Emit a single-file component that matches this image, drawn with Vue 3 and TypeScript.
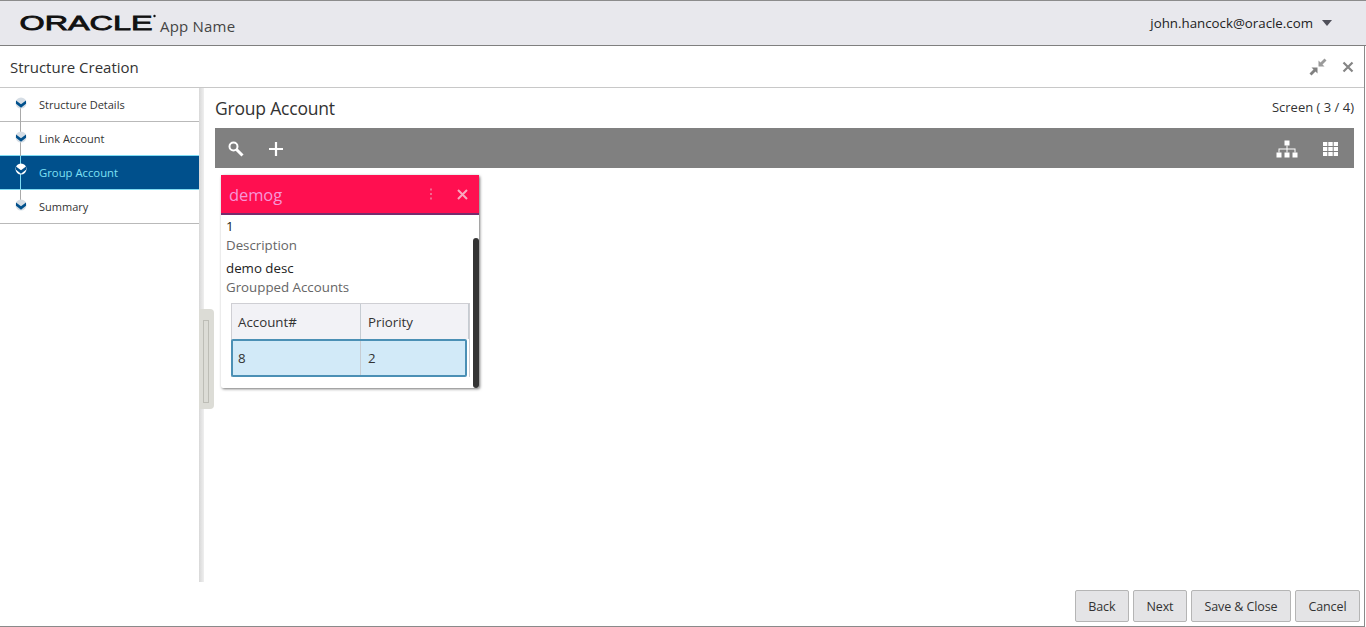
<script setup lang="ts">
interface Step { label: string; active?: boolean }
const steps: Step[] = [
  { label: 'Structure Details' },
  { label: 'Link Account' },
  { label: 'Group Account', active: true },
  { label: 'Summary' },
]
const buttons: string[] = ['Back', 'Next', 'Save & Close', 'Cancel']
</script>

<template>
  <div class="page">
    <header class="topbar">
      <div class="brand">
        <svg class="logo" width="138" height="24" viewBox="0 0 138 24">
          <text x="0.500" y="20" textLength="133" lengthAdjust="spacingAndGlyphs" class="logo-text">ORACLE</text>
          <circle cx="135.500" cy="6" r="1.200" fill="#111" />
        </svg>
        <span class="app-name">App Name</span>
      </div>
      <div class="user">
        <span>john.hancock@oracle.com</span>
        <svg width="10" height="6" viewBox="0 0 10 6"><path d="M0 0h10L5 6z" fill="#50505a" /></svg>
      </div>
    </header>

    <div class="window">
      <div class="titlebar">
        <span class="title">Structure Creation</span>
        <div class="window-actions">
          <svg width="18" height="18" viewBox="0 0 18 18">
            <path d="M9.500 8.500V2.500l2 2L15.500 .5 17.500 2.500l-4 4 2 2z" fill="#9a9a9a" />
            <path d="M8.500 9.500v6l-2-2L2.500 17.500 .5 15.500l4-4-2-2z" fill="#808080" />
          </svg>
          <svg width="12" height="12" viewBox="0 0 12 12"><path d="M1.500 1.500l9 9M10.500 1.500l-9 9" stroke="#858585" stroke-width="2.200" /></svg>
        </div>
      </div>

      <div class="main">
        <nav class="sidebar">
          <div class="rail"></div>
          <div v-for="s in steps" :key="s.label" class="step" :class="{ active: s.active }">
            <span class="node">
              <svg width="12" height="12" viewBox="0 0 12 12">
                <circle cx="6" cy="6" r="5.500" :fill="s.active ? '#ffffff' : '#d5dde5'" />
                <path d="M1 3.600L6 7.200l5-3.600v3.200L6 10.800 1 6.800z" fill="#00508c" />
              </svg>
            </span>
            <span>{{ s.label }}</span>
          </div>
        </nav>

        <div class="divider"><span class="grip"><i></i></span></div>

        <section class="content">
          <div class="content-head">
            <h1>Group Account</h1>
            <span class="screen">Screen ( 3 / 4)</span>
          </div>

          <div class="toolbar">
            <div class="tools">
              <svg width="18" height="18" viewBox="0 0 18 18" fill="none" stroke="#fff">
                <circle cx="6.500" cy="6.500" r="4" stroke-width="2" />
                <path d="M9.500 9.500l6 6" stroke-width="3" />
              </svg>
              <svg width="16" height="16" viewBox="0 0 16 16"><path d="M8 1v14M1 8h14" stroke="#fff" stroke-width="2.200" /></svg>
            </div>
            <div class="tools right">
              <svg width="22" height="18" viewBox="0 0 22 18" fill="#fff">
                <rect x="8.500" y="0.500" width="5" height="5" />
                <rect x="0.500" y="12.500" width="5" height="5" />
                <rect x="8.500" y="12.500" width="5" height="5" />
                <rect x="16.500" y="12.500" width="5" height="5" />
                <path d="M10.500 5.500h1V8.500H19.500V12.500h-1V9.500H11.500V12.500h-1V9.500H3.500V12.500h-1V8.500H10.500z" />
              </svg>
              <svg width="15" height="14" viewBox="0 0 15 14" fill="#fff">
                <path d="M0 0h4.300v4H0zM5.300 0h4.400v4H5.300zM10.700 0H15v4h-4.300zM0 5h4.300v4H0zM5.300 5h4.400v4H5.300zM10.700 5H15v4h-4.300zM0 10h4.300v4H0zM5.300 10h4.400v4H5.300zM10.700 10H15v4h-4.300z" />
              </svg>
            </div>
          </div>

          <article class="card">
            <div class="card-head">
              <span class="card-title">demog</span>
              <div class="card-actions">
                <svg width="4" height="12" viewBox="0 0 4 12" fill="#f2688f">
                  <rect x="1" y="0.500" width="2" height="2" />
                  <rect x="1" y="5" width="2" height="2" />
                  <rect x="1" y="9.500" width="2" height="2" />
                </svg>
                <svg width="11" height="11" viewBox="0 0 11 11"><path d="M1 1l9 9M10 1l-9 9" stroke="#f9a8bf" stroke-width="2" /></svg>
              </div>
            </div>
            <div class="card-body">
              <div class="value">1</div>
              <div class="label">Description</div>
              <div class="value second">demo desc</div>
              <div class="label">Groupped Accounts</div>
              <div class="table">
                <div class="cell head">Account#</div>
                <div class="cell head">Priority</div>
                <div class="selected">
                  <div class="cell">8</div>
                  <div class="cell">2</div>
                </div>
              </div>
              <span class="scroll"></span>
            </div>
          </article>
        </section>
      </div>

      <footer class="footer">
        <button v-for="b in buttons" :key="b" type="button">{{ b }}</button>
      </footer>
    </div>
  </div>
</template>

<style>
html, body { margin: 0; background: #fff; }
</style>

<style scoped>
.page {
  width: 1366px;
  height: 627px;
  box-sizing: border-box;
  display: flex;
  flex-direction: column;
  overflow: hidden;
  font-family: "Open Sans", "Noto Sans", sans-serif;
  color: #2b2b2b;
  background: #fff;
}
.topbar {
  height: 46px;
  flex: none;
  box-sizing: border-box;
  border-top: 1px solid #8c8c8c;
  border-bottom: 1px solid #7f7f7f;
  background: #e8e8ed;
  display: flex;
  justify-content: space-between;
  align-items: center;
  padding: 0 34px 0 19px;
}
.brand { display: flex; align-items: flex-end; gap: 3px; }
.logo { display: block; margin-bottom: 2px; }
.logo-text {
  font-family: "Liberation Sans", sans-serif;
  font-weight: 400;
  font-size: 21px;
  fill: #111;
  stroke: #111;
  stroke-width: 0.800px;
}
.app-name { font-size: 15px; letter-spacing: 0.2px; color: #444; line-height: 20px; }
.user { display: flex; align-items: center; gap: 9px; font-size: 13.300px; color: #222; }
.window {
  flex: 1;
  min-height: 0;
  display: flex;
  flex-direction: column;
  margin-right: 1px;
  border-right: 1px solid #8a8a8a;
  border-bottom: 1px solid #8a8a8a;
}
.titlebar {
  height: 42px;
  flex: none;
  box-sizing: border-box;
  border-bottom: 1px solid #c8c8c8;
  display: flex;
  justify-content: space-between;
  align-items: center;
  padding: 0 10px;
}
.title { font-size: 15px; color: #333; }
.window-actions { display: flex; align-items: center; gap: 15px; }
.main { flex: 1; min-height: 0; display: flex; }
.sidebar { width: 199px; flex: none; position: relative; }
.rail {
  position: absolute;
  left: 20px;
  top: 16px;
  height: 103px;
  width: 1px;
  background: #a9a9a9;
  z-index: 2;
}
.step {
  height: 34px;
  box-sizing: border-box;
  border-bottom: 1px solid #b9b9b9;
  display: flex;
  align-items: center;
  padding-left: 39px;
  font-size: 11px;
  color: #333;
  position: relative;
}
.step.active {
  background: #00508c;
  color: #7fe0f5;
  font-size: 11.300px;
  border-bottom-color: #7fdcf3;
  box-shadow: 0 -1px 0 #7fdcf3;
}
.step.active::after {
  content: "";
  position: absolute;
  left: 20px;
  top: 0;
  bottom: -1px;
  width: 1px;
  background: #7fdcf3;
  z-index: 2;
}
.node { position: absolute; left: 15px; top: 9px; z-index: 3; line-height: 0; }
.step.active .node { top: 7px; }
.divider {
  width: 5px;
  flex: none;
  background: linear-gradient(to right, #d8d8d8, #efefef);
  position: relative;
}
.grip {
  position: absolute;
  left: 0;
  top: 221px;
  width: 15px;
  height: 100px;
  box-sizing: border-box;
  background: #dcdcd6;
  border-radius: 0 4px 4px 0;
  padding: 11px 5px 6px 4px;
}
.grip i { display: block; height: 100%; border: 1px solid #bdbdb6; box-sizing: border-box; }
.content { flex: 1; min-width: 0; padding: 0 10px 0 11px; }
.content-head {
  height: 40px;
  display: flex;
  justify-content: space-between;
  align-items: center;
}
h1 { margin: 0; font-size: 17.500px; font-weight: 400; letter-spacing: -0.2px; color: #333; }
.screen { font-size: 13px; color: #333; margin-top: -2px; }
.toolbar {
  height: 40px;
  background: #808080;
  display: flex;
  justify-content: space-between;
  align-items: center;
  padding: 2px 16px 0 12px;
  box-sizing: border-box;
}
.tools { display: flex; align-items: center; gap: 23px; }
.tools.right { gap: 25px; }
.card {
  width: 258px;
  height: 213px;
  margin: 7px 0 0 6px;
  box-sizing: border-box;
  background: #fff;
  box-shadow: 1px 1px 3px rgba(0, 0, 0, 0.55);
  border-radius: 2px;
  position: relative;
}
.card-head {
  height: 40px;
  box-sizing: border-box;
  background: #ff0f50;
  border-bottom: 2px solid #752c6d;
  display: flex;
  justify-content: space-between;
  align-items: center;
  padding: 0 11px 0 8px;
}
.card-title { font-size: 16.500px; letter-spacing: -0.1px; color: #f796d6; }
.card-actions { display: flex; align-items: center; gap: 24px; }
.card-body { padding: 2px 10px 0 5px; font-size: 13.300px; line-height: 18px; }
.value { color: #222; height: 19px; }
.value.second { margin-top: 4px; }
.label { color: #666; height: 19px; }
.table {
  margin: 6px 0 0 5px;
  width: 239px;
  box-sizing: border-box;
  display: grid;
  grid-template-columns: 129px 108px;
  border: 1px solid #cfcfd4;
  border-bottom: 0;
}
.cell {
  height: 34px;
  box-sizing: border-box;
  padding-left: 7px;
  display: flex;
  align-items: center;
  color: #333;
  border-right: 1px solid #c6ccd2;
}
.cell.head { background: #f2f2f6; height: 35px; }
.cell.head:first-child { padding-left: 6px; }
.selected {
  grid-column: 1 / 3;
  display: grid;
  grid-template-columns: 128px 1fr;
  margin: 0 2px 0 -1px;
  border: 2px solid #4b90b5;
  border-radius: 2px;
  background: #d2eaf8;
}
.selected .cell:first-child { padding-left: 5px; }
.selected .cell:last-child { border-right: 0; }
.scroll {
  position: absolute;
  right: 0;
  top: 63px;
  bottom: 0;
  width: 6px;
  border-radius: 3px;
  background: #333;
}
.footer {
  height: 44px;
  flex: none;
  display: flex;
  justify-content: flex-end;
  align-items: flex-start;
  gap: 4px;
  padding: 8px 4px 0 0;
  box-sizing: border-box;
}
button {
  height: 32px;
  box-sizing: border-box;
  padding: 0 12.500px;
  font-family: inherit;
  font-size: 12.500px;
  letter-spacing: -0.1px;
  color: #333;
  background: #e4e4e6;
  border: 1px solid #b5b5b5;
  border-radius: 2px;
}
</style>
